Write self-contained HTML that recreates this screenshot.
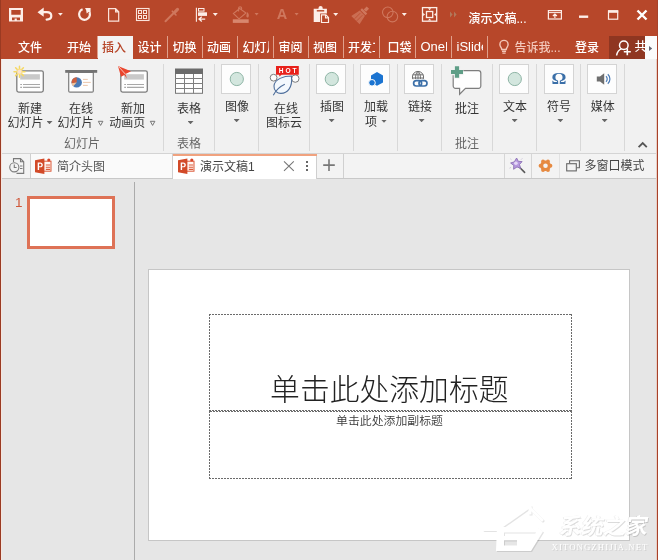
<!DOCTYPE html>
<html lang="zh-CN">
<head>
<meta charset="utf-8">
<title>演示文稿1 - PowerPoint</title>
<style>
*{margin:0;padding:0;box-sizing:border-box}
html,body{width:658px;height:560px;overflow:hidden;background:#e6e6e6}
body{font-family:"Liberation Sans","Noto Sans CJK SC",sans-serif;font-size:12px;color:#444;position:relative}
.abs{position:absolute}
#titlebar{left:0;top:0;width:658px;height:59px;background:#b7472a}
.tab{font-weight:500;position:absolute;top:37.5px;height:21.5px;line-height:21px;color:#fff;font-size:12px;white-space:nowrap;overflow:hidden}
.tsep{position:absolute;top:36px;width:1px;height:22px;background:#e0a08c}
#ribbon{left:0;top:59px;width:658px;height:95px;background:#f1f1f1;border-bottom:1px solid #d2d2d2}
.rl{position:absolute;font-size:12px;line-height:15px;color:#363636;text-align:center;white-space:nowrap}
.gl{position:absolute;font-size:12px;line-height:14px;color:#666;text-align:center;white-space:nowrap}
.gsep{position:absolute;top:64px;width:1px;height:87px;background:#d8d8d8}
.ibox{position:absolute;width:30px;height:30px;background:#fdfdfd;border:1px solid #d4d4d4}
.arr{position:absolute;width:6px;height:3.300px;background:#666;clip-path:polygon(0 0,100% 0,50% 100%)}
#docbar{left:0;top:154px;width:658px;height:25px;background:#f3f3f3;border-bottom:1px solid #c8c8c8}
#main{left:0;top:179px;width:658px;height:381px;background:#e6e6e6}
#slide{left:148px;top:269px;width:482px;height:272px;background:#fff;border:1px solid #c6c6c6}
.ph{position:absolute;--c:#6b6b6b;background:
repeating-linear-gradient(90deg,var(--c) 0 2px,transparent 2px 3px) 0 0/100% 1px no-repeat,
repeating-linear-gradient(90deg,var(--c) 0 2px,transparent 2px 3px) 0 100%/100% 1px no-repeat,
repeating-linear-gradient(180deg,var(--c) 0 2px,transparent 2px 3px) 0 0/1px 100% no-repeat,
repeating-linear-gradient(180deg,var(--c) 0 2px,transparent 2px 3px) 100% 0/1px 100% no-repeat}
.ph2{background:
repeating-linear-gradient(90deg,transparent 0 1px,var(--c) 1px 3px) 0 0/100% 1px no-repeat,
repeating-linear-gradient(90deg,var(--c) 0 2px,transparent 2px 3px) 0 100%/100% 1px no-repeat,
repeating-linear-gradient(180deg,var(--c) 0 2px,transparent 2px 3px) 0 0/1px 100% no-repeat,
repeating-linear-gradient(180deg,var(--c) 0 2px,transparent 2px 3px) 100% 0/1px 100% no-repeat}
</style>
</head>
<body>
<div id="wrap" style="position:absolute;left:0;top:0;width:658px;height:560px;will-change:transform">
<div id="titlebar" class="abs">
<svg class="abs" style="left:0;top:0" width="658" height="36" viewBox="0 0 658 36" fill="none" stroke="none">
<!-- save -->
<path fill="#fdeee8" fill-rule="evenodd" d="M9 8h14v13.600H9z M11.300 9.900v4.800h9.400V9.900z M12 17.400v2.900h2.600v-1.700h2.200v1.700H20v-2.900z"/>
<!-- undo -->
<path d="M40 12.200H46.800c3.200 0 4.500 1.900 4.500 3.900 0 2.100-1.700 3.500-4.700 3.500" stroke="#fdeee8" stroke-width="2.200" fill="none" stroke-linecap="round"/>
<path d="M37.500 12.200L43.700 7.600V16.800Z" fill="#fdeee8"/>
<path d="M58 13h4.800l-2.400 2.800z" fill="#fdeee8"/>
<!-- redo -->
<path d="M82.600 9.300A5.400 5.400 0 1 0 89.600 12.600" stroke="#fdeee8" stroke-width="2.200" fill="none"/>
<path d="M85 7.900h5.600v5.800l-1.900-1.700-2 1.500-.6-3.600z" fill="#fdeee8"/>
<!-- new doc -->
<path d="M108.600 8.700h7l3.100 3.100v9.300h-10.100z M115.600 8.700v3.100h3.100" stroke="#fbe3da" stroke-width="1.200" fill="none"/>
<!-- grid -->
<rect x="136.500" y="8.500" width="12.500" height="12" stroke="#fbe3da" stroke-width="1.100"/>
<rect x="138.500" y="10.500" width="3" height="3" stroke="#fbe3da" stroke-width="1"/>
<rect x="143.500" y="10.500" width="3" height="3" stroke="#fbe3da" stroke-width="1"/>
<rect x="138.500" y="15.500" width="3" height="3" stroke="#fbe3da" stroke-width="1"/>
<rect x="143.500" y="15.500" width="3" height="3" stroke="#fbe3da" stroke-width="1"/>
<!-- eyedropper dim -->
<g stroke="#cf775d" fill="none" stroke-linecap="round">
<path d="M165.500 21.300L173.500 13.200" stroke-width="2"/>
<path d="M172.300 11.200L176 15" stroke-width="1.600"/>
<path d="M174.500 12.500L177.500 9.400" stroke-width="3.200"/>
</g>
<!-- align -->
<path d="M196.400 7.800v13.900" stroke="#fdeee8" stroke-width="1.100"/>
<rect x="198.500" y="8.500" width="5.500" height="2.600" stroke="#fdeee8" stroke-width="1"/>
<rect x="198" y="12.300" width="9" height="3.600" fill="#fdeee8"/>
<path d="M199 19.100h6.200 M201.800 16.700L199 19.100l2.800 2.400" stroke="#fdeee8" stroke-width="1.300" fill="none"/>
<path d="M212.800 13h5l-2.500 3z" fill="#fdeee8"/>
<!-- paint bucket dim -->
<g stroke="#cf775d" fill="none">
<rect x="232.800" y="19.300" width="15.900" height="3.600" fill="#d8876e" stroke="none"/>
<path d="M239.700 8.500L233.400 13.500l5.600 5.300 7-5.800z M238.600 11.500V8.300a1.500 1.500 0 0 1 3 0V10" stroke-width="1.100"/>
<path d="M247.400 12c1.600 2 1.800 3.600 1 5.200-1 .6-2 .2-2-1.200 0-1.300.6-2.400 1-4z" fill="#cf775d" stroke="none"/>
</g>
<path d="M254.600 13h4l-2 2.400z" fill="#cf775d"/>
<!-- A dim -->
<path d="M294.600 13h4l-2 2.400z" fill="#cf775d"/>
<!-- paste -->
<path d="M313.700 8.800h4.800V8a2.100 2.100 0 0 1 4.200 0v.8h4.200v4.600h-6.800V22h-6.400z" fill="#fdeee8"/>
<rect x="316.800" y="10.100" width="7.400" height="1.400" fill="#b7472a"/>
<path d="M321.500 14.900h4.400l2.600 2.600v5h-7z" stroke="#fdeee8" stroke-width="1.200" fill="#b7472a"/>
<path d="M325.500 14.900v3h3" stroke="#fdeee8" stroke-width="1.100" fill="none"/>
<path d="M333.200 13h5l-2.500 3z" fill="#fdeee8"/>
<!-- format painter dim -->
<g fill="#cf775d" transform="rotate(45 361 14.500)">
<rect x="359.300" y="4.800" width="3.400" height="4.200"/>
<rect x="357.300" y="9.400" width="7.400" height="2.400"/>
<path d="M357.300 12.600h7.400l2.200 9.800h-11.800z" opacity=".8"/>
<path d="M359.500 14v8 M362.500 14v8" stroke="#b7472a" stroke-width=".9" opacity=".7"/>
</g>
<!-- circles dim -->
<circle cx="387.800" cy="12.300" r="5.300" stroke="#cf775d" stroke-width="1.100"/>
<circle cx="392.400" cy="16.600" r="5.300" stroke="#cf775d" stroke-width="1.100"/>
<path d="M401.800 13h5l-2.500 3z" fill="#fdeee8"/>
<!-- fit -->
<rect x="422.500" y="7.600" width="14.200" height="13.600" stroke="#fdeee8" stroke-width="1.300"/>
<rect x="426.500" y="11.500" width="6.200" height="6" stroke="#fdeee8" stroke-width="1.300"/>
<path d="M428 8.200h3.200l-1.600 2z M428 20.600h3.200l-1.600-2z M423.100 12.900v3.200l2-1.600z M436.100 12.900v3.200l-2-1.600z" fill="#fdeee8"/>
<!-- chevrons dim -->
<path d="M450 11.500l2.600 3-2.600 3z M454 11.500l2.600 3-2.600 3z" fill="#b08468" opacity=".8"/>
<!-- ribbon display -->
<rect x="548.400" y="10.600" width="13" height="8.400" stroke="#fdeee8" stroke-width="1.200"/>
<path d="M548.400 12.600h13" stroke="#fdeee8" stroke-width="1"/>
<path d="M554.900 18v-3.600 M552.900 16l2-2 2 2" stroke="#fdeee8" stroke-width="1.200" fill="none"/>
<!-- min -->
<rect x="579" y="15.500" width="9.200" height="2.400" fill="#fdeee8"/>
<!-- max -->
<rect x="608.500" y="11" width="9.200" height="8.200" stroke="#fdeee8" stroke-width="1.200"/>
<rect x="608" y="10.200" width="10.200" height="2.600" fill="#fdeee8"/>
<!-- close -->
<path d="M637.500 10.500l9 9 M646.500 10.500l-9 9" stroke="#fff" stroke-width="2.400"/>
</svg>
<div class="abs" style="left:276px;top:6px;width:12px;font-size:14.500px;font-weight:700;line-height:17px;color:#cf775d;text-align:center">A</div>
<div class="abs" style="left:468.500px;top:11px;font-size:12px;font-weight:500;line-height:16px;color:#fff;white-space:nowrap">演示文稿...</div>
</div>
<!-- tabs -->
<div class="abs" style="left:98px;top:36px;width:35px;height:23px;background:#f3f3f3"></div>
<div class="tab" style="left:18px">文件</div>
<div class="tab" style="left:67px">开始</div>
<div class="tab" style="left:102px;color:#b7472a">插入</div>
<div class="tab" style="left:137.500px">设计</div>
<div class="tab" style="left:172.500px">切换</div>
<div class="tab" style="left:207px">动画</div>
<div class="tab" style="left:242.500px;width:26px">幻灯片放映</div>
<div class="tab" style="left:278.500px">审阅</div>
<div class="tab" style="left:313px">视图</div>
<div class="tab" style="left:348px;width:26.500px">开发工具</div>
<div class="tab" style="left:387.500px">口袋</div>
<div class="tab" style="left:420.500px;top:35.500px;width:26.500px;font-size:13px;font-weight:400">OneKey</div>
<div class="tab" style="left:456.500px;top:35.500px;width:26.500px;font-size:13px;font-weight:400">iSlide</div>
<div class="tsep" style="left:97px"></div>
<div class="tsep" style="left:167px"></div>
<div class="tsep" style="left:202px"></div>
<div class="tsep" style="left:237px"></div>
<div class="tsep" style="left:273px"></div>
<div class="tsep" style="left:308px"></div>
<div class="tsep" style="left:343px"></div>
<div class="tsep" style="left:379px"></div>
<div class="tsep" style="left:415px"></div>
<div class="tsep" style="left:451px"></div>
<div class="tsep" style="left:487px"></div>
<svg class="abs" style="left:497px;top:38px" width="14" height="18" viewBox="0 0 14 18" fill="none" stroke="#f3c5b6" stroke-width="1.400">
<path d="M4.800 11.500c0-1.800-1.900-2.600-1.900-5a4.100 4.100 0 0 1 8.200 0c0 2.400-1.900 3.200-1.900 5z"/>
<path d="M5 13.300h4 M5.400 15.100h3.200"/>
</svg>
<div class="tab" style="left:514.500px;color:#f3c9bc">告诉我...</div>
<div class="tab" style="left:575px">登录</div>
<div class="abs" style="left:609px;top:36px;width:36px;height:23px;background:#8f3621"></div>
<svg class="abs" style="left:614px;top:38px" width="20" height="20" viewBox="0 0 20 20" fill="none" stroke="#fff" stroke-width="1.500">
<circle cx="9.800" cy="7.300" r="4.300"/>
<path d="M2.600 17.500c0.600-3.600 2.800-6 5-6.600"/>
<path d="M13.300 10.200v7 M9.800 13.700h7" stroke-width="1.600"/>
</svg>
<div class="tab" style="left:634.500px;top:36.500px;width:10px;font-size:12px">共享</div>
<div class="abs" style="left:644.500px;top:36px;width:12px;height:23.500px;background:#fbfbfb"></div>
<div class="abs" style="left:649px;top:46px;width:3.200px;height:5px;background:#626270;clip-path:polygon(0 0,100% 50%,0 100%)"></div>
<!-- window edges -->
<div class="abs" style="left:0;top:0;width:1px;height:560px;background:#9a3a22;z-index:50"></div>
<div class="abs" style="left:1px;top:59px;width:1px;height:501px;background:#f6e6df;z-index:50"></div>
<div class="abs" style="left:657px;top:0;width:1px;height:560px;background:#a8422a;z-index:50"></div>
<div class="abs" style="left:656px;top:59px;width:1px;height:501px;background:#e9cfc6;z-index:50"></div>
<div id="ribbon" class="abs">
<!-- coordinates inside ribbon are relative to top:59 -->
</div>
<!-- ribbon content (absolute page coords) -->
<div class="gsep" style="left:163px"></div>
<div class="gsep" style="left:214px"></div>
<div class="gsep" style="left:258px"></div>
<div class="gsep" style="left:309px"></div>
<div class="gsep" style="left:353px"></div>
<div class="gsep" style="left:397px"></div>
<div class="gsep" style="left:441px"></div>
<div class="gsep" style="left:492px"></div>
<div class="gsep" style="left:536px"></div>
<div class="gsep" style="left:580px"></div>
<div class="gsep" style="left:624px"></div>

<!-- 1 new slide -->
<svg class="abs" style="left:12px;top:64px" width="36" height="32" viewBox="0 0 36 32" fill="none">
<rect x="4.800" y="6.800" width="26.500" height="21.300" rx="1.800" fill="#fefefe" stroke="#7d7d7d" stroke-width="1.300"/>
<rect x="8.200" y="10.200" width="19.700" height="5.400" fill="#c9c9c9"/>
<path d="M8.200 20.500h1.800 M11 20.500h17 M8.200 23.400h1.800 M11 23.400h17" stroke="#a8a8a8" stroke-width="1.100"/>
<g stroke="#f5d862" stroke-width="1.500" stroke-linecap="round">
<path d="M7.500 2.200v11 M2 7.700h11 M3.600 3.800l7.800 7.800 M11.400 3.800l-7.800 7.800"/>
</g>
<circle cx="7.500" cy="7.700" r="3" fill="#f7de8a"/>
<circle cx="7.500" cy="7.700" r="2" fill="#fbe3d3"/>
</svg>
<div class="rl" style="left:0;width:60px;top:101.500px">新建</div>
<div class="rl" style="left:7.500px;top:116px;text-align:left">幻灯片</div>
<div class="arr" style="left:46.500px;top:121px"></div>

<!-- 2 online slides -->
<svg class="abs" style="left:62px;top:64px" width="38" height="32" viewBox="0 0 38 32" fill="none">
<path d="M6.700 8.500h24.600v18.500a1.200 1.200 0 0 1-1.200 1.200H7.900a1.200 1.200 0 0 1-1.200-1.200z" fill="#fefefe" stroke="#7d7d7d" stroke-width="1.200"/>
<rect x="3.200" y="6" width="32" height="2.800" fill="#737373"/>
<circle cx="14.700" cy="18.400" r="5.200" fill="#4a7ab5"/>
<path d="M14.700 18.400V13.200A5.200 5.200 0 0 0 9.600 19.300z" fill="#cf5f3c"/>
<path d="M14.700 18.400L9.600 19.300A5.200 5.200 0 0 0 11.200 22.300z" fill="#f2c49a"/>
<path d="M21 15.400h4.800 M21 18.400h7.800 M21 21.400h4.800" stroke="#e9bfa2" stroke-width=".9"/>
</svg>
<div class="rl" style="left:51px;width:60px;top:101.500px">在线</div>
<div class="rl" style="left:57.500px;top:116px;text-align:left">幻灯片</div>
<svg class="abs" style="left:97px;top:120px" width="7" height="7" viewBox="0 0 7 7"><path d="M1.300 1.300h4.600L3.600 5.400z" fill="none" stroke="#777" stroke-width="1"/></svg>

<!-- 3 new animation page -->
<svg class="abs" style="left:114px;top:64px" width="38" height="32" viewBox="0 0 38 32" fill="none">
<rect x="6.800" y="6.800" width="26.500" height="21.300" rx="1.800" fill="#fefefe" stroke="#7d7d7d" stroke-width="1.300"/>
<rect x="10.200" y="10.200" width="19.700" height="5.400" fill="#c9c9c9"/>
<path d="M10.200 20.500h1.800 M13 20.500h17 M10.200 23.400h1.800 M13 23.400h17" stroke="#a8a8a8" stroke-width="1.100"/>
<path d="M4 2L17 7.200 11.500 10l1.400 4.600L10.400 11 7 12.800z" fill="#ea452d"/>
<path d="M4.600 2.600l7 7.800" stroke="#fbe6df" stroke-width=".8"/>
</svg>
<div class="rl" style="left:103px;width:60px;top:101.500px">新加</div>
<div class="rl" style="left:109.300px;top:116px;text-align:left">动画页</div>
<svg class="abs" style="left:149px;top:120px" width="7" height="7" viewBox="0 0 7 7"><path d="M1.300 1.300h4.600L3.600 5.400z" fill="none" stroke="#777" stroke-width="1"/></svg>
<div class="gl" style="left:52px;width:60px;top:137px">幻灯片</div>

<!-- 4 table -->
<svg class="abs" style="left:174px;top:68px" width="30" height="27" viewBox="0 0 30 27" fill="none">
<rect x="1.500" y="1.200" width="27" height="24.100" fill="#fefefe" stroke="#777" stroke-width="1"/>
<rect x="1" y=".7" width="28" height="5.300" fill="#6b6b6b"/>
<path d="M1 10.500h28 M1 15.500h28 M1 20.500h28 M10.500 6v19.500 M19.500 6v19.500" stroke="#7f7f7f" stroke-width="1"/>
</svg>
<div class="rl" style="left:159px;width:60px;top:101.500px">表格</div>
<div class="arr" style="left:187.500px;top:121px"></div>
<div class="gl" style="left:159px;width:60px;top:137px">表格</div>

<!-- 5 image -->
<div class="ibox" style="left:221px;top:64px"></div>
<svg class="abs" style="left:221px;top:64px" width="30" height="30"><circle cx="15.800" cy="15" r="6.600" fill="#d3e6de" stroke="#8fb5a6" stroke-width="1"/></svg>
<div class="rl" style="left:207px;width:60px;top:99.500px">图像</div>
<div class="arr" style="left:233.600px;top:119px"></div>

<!-- 6 online icon cloud -->
<svg class="abs" style="left:266px;top:64px" width="38" height="34" viewBox="0 0 38 34" fill="none">
<circle cx="7.600" cy="13.700" r="3.400" fill="#fdfdfd" stroke="#7c7c7c" stroke-width="1"/>
<circle cx="29.300" cy="14.600" r="3.700" fill="#fdfdfd" stroke="#7c7c7c" stroke-width="1"/>
<path d="M25.400 12C18 12 8.500 15 8 22c-.3 5 3.500 7.500 7 7.400 6-.2 12-5.400 10.400-17.400z" fill="#f3f8fd" stroke="#4f6f9c" stroke-width="1.100"/>
<path d="M7.300 31.200C10 26 14 22.500 18.800 20.300" stroke="#4f6f9c" stroke-width="1.100"/>
<path d="M10 2h22.800v8.700H15.600L13.400 12.600 13.200 10.700H10z" fill="#e8201a"/>
<text x="22.600" y="8.700" font-family="Liberation Sans, sans-serif" font-size="6.600" font-weight="700" fill="#fff" text-anchor="middle" letter-spacing="2">HOT</text>
</svg>
<div class="rl" style="left:256px;width:60px;top:101.500px">在线</div>
<div class="rl" style="left:254px;width:60px;top:116px">图标云</div>

<!-- 7 illustration -->
<div class="ibox" style="left:316px;top:64px"></div>
<svg class="abs" style="left:316px;top:64px" width="30" height="30"><circle cx="15.800" cy="15" r="6.600" fill="#d3e6de" stroke="#8fb5a6" stroke-width="1"/></svg>
<div class="rl" style="left:302px;width:60px;top:99.500px">插图</div>
<div class="arr" style="left:328.600px;top:119px"></div>

<!-- 8 add-ins -->
<div class="ibox" style="left:360px;top:64px"></div>
<svg class="abs" style="left:360px;top:64px" width="30" height="30" viewBox="0 0 30 30">
<path d="M17 8l6 3.400v7l-6 3.400-6-3.400v-7z" fill="#1b74d1"/>
<circle cx="12" cy="18.800" r="3.300" fill="#1b74d1" stroke="#fdfdfd" stroke-width="1"/>
</svg>
<div class="rl" style="left:346px;width:60px;top:99.500px">加载</div>
<div class="rl" style="left:365px;top:114.500px;text-align:left">项</div>
<div class="arr" style="left:381px;top:119.500px"></div>

<!-- 9 link -->
<div class="ibox" style="left:404px;top:64px"></div>
<svg class="abs" style="left:404px;top:64px" width="30" height="30" viewBox="0 0 30 30" fill="none">
<circle cx="14" cy="13" r="5.600" stroke="#707070" stroke-width="1"/>
<path d="M8.800 10.800h10.400 M8.400 14h11.200 M14 7.400v8 M14 7.400c-2.300 1.600-2.600 4.500-2.400 8 M14 7.400c2.300 1.600 2.600 4.500 2.400 8" stroke="#707070" stroke-width="1"/>
<rect x="8" y="15.200" width="16.600" height="8" fill="#fdfdfd"/>
<rect x="9.600" y="16.600" width="8" height="5.400" rx="2.700" stroke="#3b6fa8" stroke-width="1.700"/>
<rect x="15" y="16.600" width="8" height="5.400" rx="2.700" stroke="#3b6fa8" stroke-width="1.700"/>
</svg>
<div class="rl" style="left:390px;width:60px;top:99.500px">链接</div>
<div class="arr" style="left:418.600px;top:119px"></div>

<!-- 10 comment -->
<svg class="abs" style="left:449px;top:64px" width="36" height="32" viewBox="0 0 36 32" fill="none">
<path d="M6.500 6.600h23a2.300 2.300 0 0 1 2.300 2.300v13.100a2.300 2.300 0 0 1-2.300 2.300H16.500l-5.900 5.900v-5.900H6.500a2.300 2.300 0 0 1-2.300-2.300V8.900a2.300 2.300 0 0 1 2.300-2.300z" fill="#fefefe" stroke="#7d7d7d" stroke-width="1.200"/>
<path d="M8 1.600v12.800 M1.600 8h12.800" stroke="#f1f1f1" stroke-width="6.400"/>
<path d="M8 2.200v11.600 M2 8h12" stroke="#5f9e87" stroke-width="4.200"/>
</svg>
<div class="rl" style="left:437px;width:60px;top:101.500px">批注</div>
<div class="gl" style="left:437px;width:60px;top:137px">批注</div>

<!-- 11 text -->
<div class="ibox" style="left:499px;top:64px"></div>
<svg class="abs" style="left:499px;top:64px" width="30" height="30"><circle cx="15.800" cy="15" r="6.600" fill="#d3e6de" stroke="#8fb5a6" stroke-width="1"/></svg>
<div class="rl" style="left:485px;width:60px;top:99.500px">文本</div>
<div class="arr" style="left:511.600px;top:119px"></div>

<!-- 12 symbol -->
<div class="ibox" style="left:543.500px;top:64px"></div>
<div class="abs" style="left:544px;top:69px;width:30px;text-align:center;font-family:'Liberation Serif',serif;font-weight:700;font-size:16.500px;line-height:20px;color:#3b6fa8;transform:scaleX(1.130)">Ω</div>
<div class="rl" style="left:529px;width:60px;top:99.500px">符号</div>
<div class="arr" style="left:557.400px;top:119px"></div>

<!-- 13 media -->
<div class="ibox" style="left:587px;top:64px"></div>
<svg class="abs" style="left:587px;top:64px" width="30" height="30" viewBox="0 0 30 30" fill="none">
<path d="M9.800 12.600h3.200l4.200-3.400v11.600l-4.200-3.400H9.800z" fill="#6e6e6e"/>
<path d="M19 12.300a3.600 3.600 0 0 1 0 5.400" stroke="#4a7ab5" stroke-width="1.200"/>
<path d="M20.800 10.300a6.300 6.300 0 0 1 0 9.400" stroke="#4a7ab5" stroke-width="1.200"/>
</svg>
<div class="rl" style="left:572.700px;width:60px;top:99.500px">媒体</div>
<div class="arr" style="left:601.600px;top:119px"></div>

<svg class="abs" style="left:637px;top:140px" width="12" height="9" viewBox="0 0 12 9" fill="none"><path d="M1.600 7.200L5.700 3l4.100 4.200" stroke="#555" stroke-width="1.800"/></svg>

<div id="docbar" class="abs"></div>
<div class="abs" style="left:0;top:153px;width:658px;height:1px;background:#d4d4d4"></div>
<!-- history icon -->
<svg class="abs" style="left:8px;top:157px" width="18" height="18" viewBox="0 0 18 18" fill="none" stroke="#7a7a7a" stroke-width="1.100">
<path d="M5.500 5V1.600h7l3.200 3.200v11.600H8.500 M12.500 1.600v3.200h3.200"/>
<circle cx="6.300" cy="10.300" r="4.600" fill="#f3f3f3"/>
<path d="M6.300 7.500v3h2.300"/>
<path d="M12 9h2.500 M12 11.500h2.500" stroke-width="1"/>
</svg>
<div class="abs" style="left:30px;top:154px;width:1px;height:24px;background:#d0d0d0"></div>
<div class="abs" style="left:31px;top:154px;width:142px;height:24px;background:#fafafa;border-right:1px solid #d0d0d0"></div>
<svg class="abs" style="left:35px;top:158px" width="18" height="17" viewBox="0 0 18 17" fill="none">
<rect x="8" y="3.200" width="8" height="10" fill="#fff7f3" stroke="#dc5a3a" stroke-width="1"/>
<path d="M10.800 7h4.400 M10.800 9.200h4.400 M10.800 11.400h4.400" stroke="#dc5a3a" stroke-width="1.100"/>
<circle cx="13.800" cy="2" r="1.600" fill="#d8452a"/>
<path d="M0 2.300L9.400 0.400v15.600L0 14.200z" fill="#d24a28"/>
<path d="M2.700 12V4.600h2.600c1.600 0 2.500 1 2.500 2.300S6.800 9.300 5.300 9.300H4.100V12z M4.100 5.700v2.500h1c.9 0 1.300-.5 1.300-1.300s-.4-1.200-1.300-1.200z" fill="#fff" fill-rule="evenodd"/>
</svg>
<div class="abs" style="left:57px;top:158.500px;font-size:12px;line-height:16px;color:#555;white-space:nowrap">简介头图</div>
<!-- active doc tab -->
<div class="abs" style="left:173px;top:154px;width:144px;height:25px;background:#fff;border-right:1px solid #cfcfcf"></div>
<div class="abs" style="left:173px;top:154px;width:144px;height:2px;background:#f0a27f"></div>
<svg class="abs" style="left:178px;top:158px" width="18" height="17" viewBox="0 0 18 17" fill="none">
<rect x="8" y="3.200" width="8" height="10" fill="#fff7f3" stroke="#dc5a3a" stroke-width="1"/>
<path d="M10.800 7h4.400 M10.800 9.200h4.400 M10.800 11.400h4.400" stroke="#dc5a3a" stroke-width="1.100"/>
<circle cx="13.800" cy="2" r="1.600" fill="#d8452a"/>
<path d="M0 2.300L9.400 0.400v15.600L0 14.200z" fill="#d24a28"/>
<path d="M2.700 12V4.600h2.600c1.600 0 2.500 1 2.500 2.300S6.800 9.300 5.300 9.300H4.100V12z M4.100 5.700v2.500h1c.9 0 1.300-.5 1.300-1.300s-.4-1.200-1.300-1.200z" fill="#fff" fill-rule="evenodd"/>
</svg>
<div class="abs" style="left:200px;top:158.500px;font-size:12px;line-height:16px;color:#444;white-space:nowrap">演示文稿1</div>
<svg class="abs" style="left:282px;top:159px" width="14" height="14" viewBox="0 0 14 14"><path d="M2 2.300l9.800 9.600 M11.800 2.300L2 11.900" stroke="#777" stroke-width="1.100"/></svg>
<div class="abs" style="left:306px;top:161px;width:2px;height:2px;background:#666;box-shadow:0 4px 0 #666,0 8px 0 #666"></div>
<svg class="abs" style="left:322px;top:158px" width="14" height="14" viewBox="0 0 14 14"><path d="M7 1.300v11.600 M1.200 7.100h11.600" stroke="#777" stroke-width="1.600"/></svg>
<div class="abs" style="left:343px;top:154px;width:1px;height:24px;background:#d0d0d0"></div>
<div class="abs" style="left:504px;top:154px;width:1px;height:24px;background:#d6d6d6"></div>
<div class="abs" style="left:531px;top:154px;width:1px;height:24px;background:#d6d6d6"></div>
<div class="abs" style="left:559px;top:154px;width:1px;height:24px;background:#e2e2e2"></div>
<!-- wand -->
<svg class="abs" style="left:509px;top:156px" width="18" height="18" viewBox="0 0 18 18" fill="none">
<path d="M10 10.800l5.600 5.600" stroke="#5a5a5a" stroke-width="1.600" stroke-linecap="round"/>
<path d="M7.600 2l1.700 3.300 3.800.3-2.600 2.900 1.200 3.900-3.700-1.500L4.600 13.300l.2-3.900L1.600 7l3.800-1.200z" fill="#b698df" stroke="#8c72b4" stroke-width=".9" stroke-linejoin="round"/>
<circle cx="6.900" cy="7.300" r="1.800" fill="#e4d8f6"/>
<path d="M12.300 3.400l.8-.8 M2.300 3.600l-.7-.6 M1.600 11.600l-.9.500" stroke="#9a86b8" stroke-width=".7"/>
</svg>
<!-- gear -->
<svg class="abs" style="left:538px;top:158.300px" width="15" height="15" viewBox="0 0 17 17" fill="none">
<circle cx="8.500" cy="8.800" r="4.300" stroke="#e68a42" stroke-width="3.400"/>
<g fill="#e68a42"><circle cx="14.100" cy="8.800" r="2.200"/><circle cx="2.900" cy="8.800" r="2.200"/><circle cx="11.300" cy="13.650" r="2.200"/><circle cx="5.700" cy="13.650" r="2.200"/><circle cx="11.300" cy="3.950" r="2.200"/><circle cx="5.700" cy="3.950" r="2.200"/></g>
</svg>
<!-- windows icon -->
<svg class="abs" style="left:565px;top:159px" width="16" height="14" viewBox="0 0 16 14" fill="none" stroke="#666" stroke-width="1.100">
<path d="M4.600 4.200V1.700h9.800v7h-3"/>
<rect x="1.700" y="4.700" width="9.600" height="7.200" fill="#f3f3f3"/>
</svg>
<div class="abs" style="left:584.500px;top:158px;font-size:12px;line-height:16px;color:#444;white-space:nowrap">多窗口模式</div>

<div id="main" class="abs"></div>
<div class="abs" style="left:134px;top:182px;width:1px;height:378px;background:#ababab"></div>
<div class="abs" style="left:15px;top:195px;font-size:13.500px;line-height:16px;color:#d0583a">1</div>
<div class="abs" style="left:27px;top:196px;width:88px;height:53px;background:#fff;border:3px solid #de7256"></div>

<div id="slide" class="abs"></div>
<div class="ph" style="left:209px;top:314px;width:363px;height:97px"></div>
<div class="ph ph2" style="left:209px;top:411px;width:363px;height:68px"></div>
<div class="abs" style="left:207.800px;top:369px;width:363px;text-align:center;font-size:29.800px;line-height:42px;font-weight:300;color:#222;white-space:nowrap">单击此处添加标题</div>
<div class="abs" style="left:208px;top:413px;width:363px;text-align:center;font-size:11.900px;line-height:17px;font-weight:350;color:#3a3a3a;white-space:nowrap">单击此处添加副标题</div>
<!-- watermark -->
<svg class="abs" style="left:478px;top:500px" width="80" height="60" viewBox="0 0 80 60" fill="none">
<g style="filter:drop-shadow(1px 1px 0.600px rgba(0,0,0,.11))">
<path d="M6 29.500h13L51 7l13 13" stroke="#fff" stroke-width="3" stroke-linejoin="round" stroke-linecap="round"/>
<path d="M52 5.500v9" stroke="#fff" stroke-width="3"/>
<path fill="#fff" fill-rule="evenodd" d="M19 27h40l6 4.500L53 51H18z M26 32.500v3.500h30l2-3.500z M26 40.500v5h13v-5z"/>
</g>
</svg>
<div class="abs" style="left:560px;top:510.500px;font-size:22px;line-height:32px;font-weight:700;color:#fff;white-space:nowrap;text-shadow:1px 1px 0 rgba(0,0,0,.14),-1px 0 0 rgba(0,0,0,.06);transform:skewX(-10deg)">系统之家</div>
<div class="abs" style="left:551.500px;top:541px;font-family:'Liberation Serif',serif;font-size:8.800px;line-height:12px;color:#fff;white-space:nowrap;text-shadow:1px 1px 0 rgba(0,0,0,.10);letter-spacing:1.050px">XITONGZHIJIA.NET</div>

</div>
</body>
</html>
